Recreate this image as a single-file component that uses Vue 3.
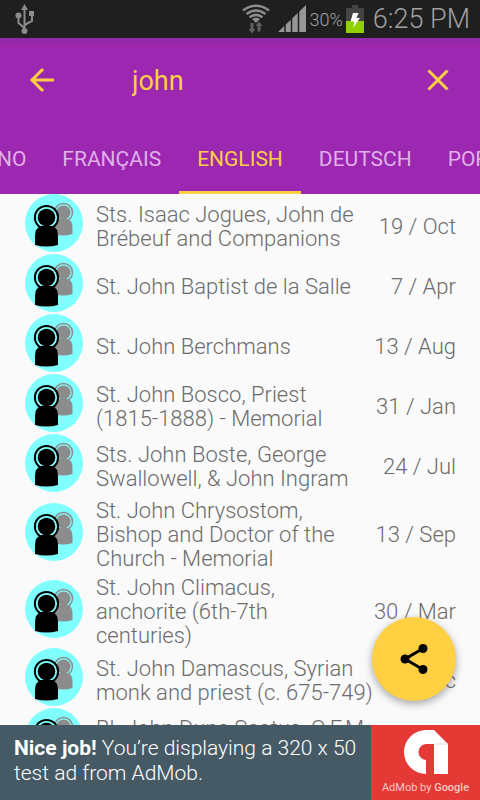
<template>
  <div class="app">
    <!-- Status bar -->
    <div class="status-bar">
      <svg class="usb" width="20" height="32" viewBox="0 0 20 32" aria-hidden="true">
        <path d="M9.500 4V28M9.500 25L3.500 20V13M9.500 22L17 18V11" fill="none" stroke="#8c8c8c" stroke-width="2" />
        <path d="M9.500 1L13 7H6Z" fill="#8c8c8c" />
        <circle cx="3.500" cy="12.500" r="3" fill="#8c8c8c" />
        <circle cx="9.500" cy="28" r="3" fill="#8c8c8c" />
        <rect x="14" y="8" width="5" height="5" fill="#8c8c8c" />
      </svg>
      <svg class="wifi" width="28" height="30" viewBox="0 0 28 30" aria-hidden="true">
        <g fill="none" stroke="#8c8c8c" stroke-width="2.600">
          <path d="M1 6.500Q14 -3 27 6.500" />
          <path d="M4.500 10Q14 3 23.500 10" />
          <path d="M7.500 13.200Q14 8.500 20.500 13.200" />
        </g>
        <path d="M10 15Q14 12 18 15L14 19Z" fill="#8c8c8c" />
        <path d="M8.500 19H11.500V25H13.500L10 29.500L6.500 25H8.500ZM15.500 27.500H18.500V22H20.500L17 17.500L13.500 22H15.500Z" fill="#606060" />
      </svg>
      <svg class="signal" width="28" height="28" viewBox="0 0 28 28" aria-hidden="true">
        <path d="M0 27L28 0V27Z" fill="#969696" />
        <path d="M7 18V27M13.500 10V27M20.500 4V27" stroke="#1f1f1f" stroke-width="1.500" />
      </svg>
      <span class="percent">30%</span>
      <svg class="battery" width="18" height="28" viewBox="0 0 18 28" aria-hidden="true">
        <path d="M6 0H12V3H18V16H0V3H6Z" fill="#444" />
        <path d="M0 16H18V28H0Z" fill="#90d000" />
        <path d="M7 8H12.500L10.500 13H14L7 23L8.500 16.500H4.500Z" fill="#fff" />
      </svg>
      <span class="time">6:25 PM</span>
    </div>

    <!-- Search toolbar -->
    <header class="header">
      <div class="toolbar">
        <button class="icon-button" aria-label="Back">
          <svg width="26" height="26" viewBox="0 0 26 26" aria-hidden="true">
            <path d="M25 13H3M14 2L3 13L14 24" />
          </svg>
        </button>
        <input v-model="query" class="search" type="text" aria-label="Search" />
        <button class="icon-button" aria-label="Clear" @click="query = ''">
          <svg width="26" height="26" viewBox="0 0 26 26" aria-hidden="true">
            <path d="M3.500 3.500L22.500 22.500M22.500 3.500L3.500 22.500" />
          </svg>
        </button>
      </div>

      <nav class="tabs">
        <div class="tab-side before">
          <button v-for="lang in tabsBefore" :key="lang" class="tab" @click="active = lang">{{ lang }}</button>
        </div>
        <button class="tab active">{{ active }}</button>
        <div class="tab-side">
          <button v-for="lang in tabsAfter" :key="lang" class="tab" @click="active = lang">{{ lang }}</button>
        </div>
      </nav>
    </header>

    <!-- Results -->
    <main class="results">
      <ul class="list">
        <li v-for="saint in saints" :key="saint.name" class="row">
          <svg class="avatar" width="58" height="58" viewBox="0 0 58 58" aria-hidden="true">
            <circle cx="29" cy="29" r="29" fill="#80ffff" />
            <g fill="#8c8c8c">
              <circle cx="38.500" cy="18.500" r="7" />
              <circle cx="38.500" cy="18.500" r="9" fill="none" stroke="#8c8c8c" stroke-width="1.500" />
              <path d="M29 40V33Q29 26 34 25H42Q47.500 26 47.500 33V40Q38 43 29 40Z" />
            </g>
            <circle cx="21.500" cy="23.500" r="12" fill="#80ffff" />
            <circle cx="21.500" cy="23.500" r="8.800" />
            <circle cx="21.500" cy="23.500" r="11.600" fill="none" stroke="#000" stroke-width="2" />
            <path d="M10 51V42Q10 34 16 32H27Q33 34 33 42V51Q21.500 54 10 51Z" />
          </svg>
          <span class="name">{{ saint.name }}</span>
          <span class="date">{{ saint.date }}</span>
        </li>
      </ul>
      <button class="fab" aria-label="Share">
        <svg width="30" height="32" viewBox="0 0 30 32" aria-hidden="true">
          <path d="M24 5.500L6 16L24 26.500" fill="none" stroke="#000" stroke-width="3" />
          <circle cx="24" cy="5.500" r="4.500" />
          <circle cx="6" cy="16" r="4.500" />
          <circle cx="24" cy="26.500" r="4.500" />
        </svg>
      </button>
    </main>

    <!-- Ad banner -->
    <aside class="ad">
      <p class="ad-text"><b>Nice job!</b> You’re displaying a 320 x 50 test ad from AdMob.</p>
      <div class="ad-brand">
        <svg width="46" height="46" viewBox="0 0 46 46" aria-hidden="true">
          <path d="M23 45A22 22 0 0 1 23 1H31L45 15V45H31V15H24A8 8 0 0 0 23 31Z" fill="#fff" />
          <path d="M31 15H45" stroke="#ddd" />
        </svg>
        <span>AdMob by <b>Google</b></span>
      </div>
    </aside>
  </div>
</template>

<script setup>
import { ref, computed } from 'vue';

const query = ref('john');

// Tabs
const languages = ['ITALIANO', 'FRANÇAIS', 'ENGLISH', 'DEUTSCH', 'PORTUGUÊS'];
const active = ref('ENGLISH');
const activeIndex = computed(() => languages.indexOf(active.value));
const tabsBefore = computed(() => languages.slice(0, activeIndex.value));
const tabsAfter = computed(() => languages.slice(activeIndex.value + 1));

// Search results
const saints = ref([
  { name: 'Sts. Isaac Jogues, John de Brébeuf and Companions', date: '19 / Oct' },
  { name: 'St. John Baptist de la Salle', date: '7 / Apr' },
  { name: 'St. John Berchmans', date: '13 / Aug' },
  { name: 'St. John Bosco, Priest\n(1815-1888) - Memorial', date: '31 / Jan' },
  { name: 'Sts. John Boste, George Swallowell, & John Ingram', date: '24 / Jul' },
  { name: 'St. John Chrysostom,\nBishop and Doctor of the Church - Memorial', date: '13 / Sep' },
  { name: 'St. John Climacus,\nanchorite (6th-7th\ncenturies)', date: '30 / Mar' },
  { name: 'St. John Damascus, Syrian\nmonk and priest (c. 675-749)', date: '4 / Dec' },
  { name: 'Bl. John Duns Scotus, O.F.M.\nPriest', date: '8 / Nov' },
]);
</script>

<style>
body {
  margin: 0;
}
</style>

<style scoped>
.app {
  display: flex;
  flex-direction: column;
  height: 100vh;
  background: #fafafa;
  font-family: Roboto, sans-serif;
}

button {
  padding: 0;
  border: none;
  background: none;
  font: inherit;
  cursor: pointer;
}

.status-bar {
  display: flex;
  align-items: center;
  flex: none;
  height: 38px;
  padding: 0 10px 0 15px;
  background: #1f1f1f;
  color: #a0a0a0;
  font-weight: 300;
}

.wifi {
  margin-left: auto;
}

.signal {
  margin-left: 8px;
}

.percent {
  margin: 0 3px 0 4px;
  font-size: 18px;
}

.time {
  margin-left: 9px;
  font-size: 27px;
}

.header {
  flex: none;
  background: linear-gradient(#9128a4, #9c27b0 10px);
  color: #ffd042;
}

.toolbar {
  display: flex;
  align-items: center;
  height: 84px;
  padding: 0 29px;
}

.icon-button {
  display: flex;
  flex: none;
}

.icon-button path {
  fill: none;
  stroke: #ffd042;
  stroke-width: 3;
}

.search {
  flex: 1;
  min-width: 0;
  margin-left: 77px;
  padding: 2px 0 0;
  border: none;
  outline: none;
  background: none;
  color: inherit;
  font: 27px Roboto, sans-serif;
}

.tabs {
  display: grid;
  grid-template-columns: minmax(0, 1fr) auto minmax(0, 1fr);
  height: 72px;
}

.tab-side {
  display: flex;
  overflow: hidden;
}

.before {
  justify-content: flex-end;
}

.tab {
  flex: none;
  padding: 4px 18px 0;
  border-bottom: 3px solid transparent;
  color: #e0b0e8;
  font-size: 21px;
}

.tab.active {
  border-color: #ffd042;
  color: #ffd042;
}

.results {
  position: relative;
  flex: 1;
  min-height: 0;
}

.list {
  height: 100%;
  margin: 0;
  padding: 0;
  overflow: hidden;
  list-style: none;
}

.row {
  display: flex;
  align-items: center;
  padding: 0 24px 2px 25px;
  color: #6c6c6c;
  font-size: 22px;
  font-weight: 300;
  line-height: 24px;
}

.avatar {
  flex: none;
}

.name {
  flex: 1;
  margin: 0 0 -2px 13px;
  padding-top: 5px;
  white-space: pre-line;
}

.date {
  flex: none;
  margin-bottom: -2px;
  padding-top: 5px;
  text-align: right;
  white-space: nowrap;
}

.fab {
  position: absolute;
  right: 24px;
  bottom: 24px;
  display: flex;
  align-items: center;
  justify-content: center;
  width: 84px;
  height: 84px;
  border-radius: 50%;
  background: #ffd042;
  box-shadow: 0 3px 8px rgba(0, 0, 0, 0.35);
}

.ad {
  display: flex;
  flex: none;
  height: 75px;
  background: #455a64;
  color: #fff;
}

.ad-text {
  flex: 1;
  margin: 0;
  padding: 11px 8px 0 14px;
  font-size: 21px;
  font-weight: 300;
  line-height: 25px;
}

.ad-text b {
  font-weight: 700;
}

.ad-brand {
  display: flex;
  flex-direction: column;
  align-items: center;
  flex: none;
  gap: 6px;
  width: 109px;
  padding-top: 4px;
  background: #e53935;
  color: #f8c8c6;
  font-size: 11px;
}

.ad-brand b {
  font-weight: 500;
}
</style>
